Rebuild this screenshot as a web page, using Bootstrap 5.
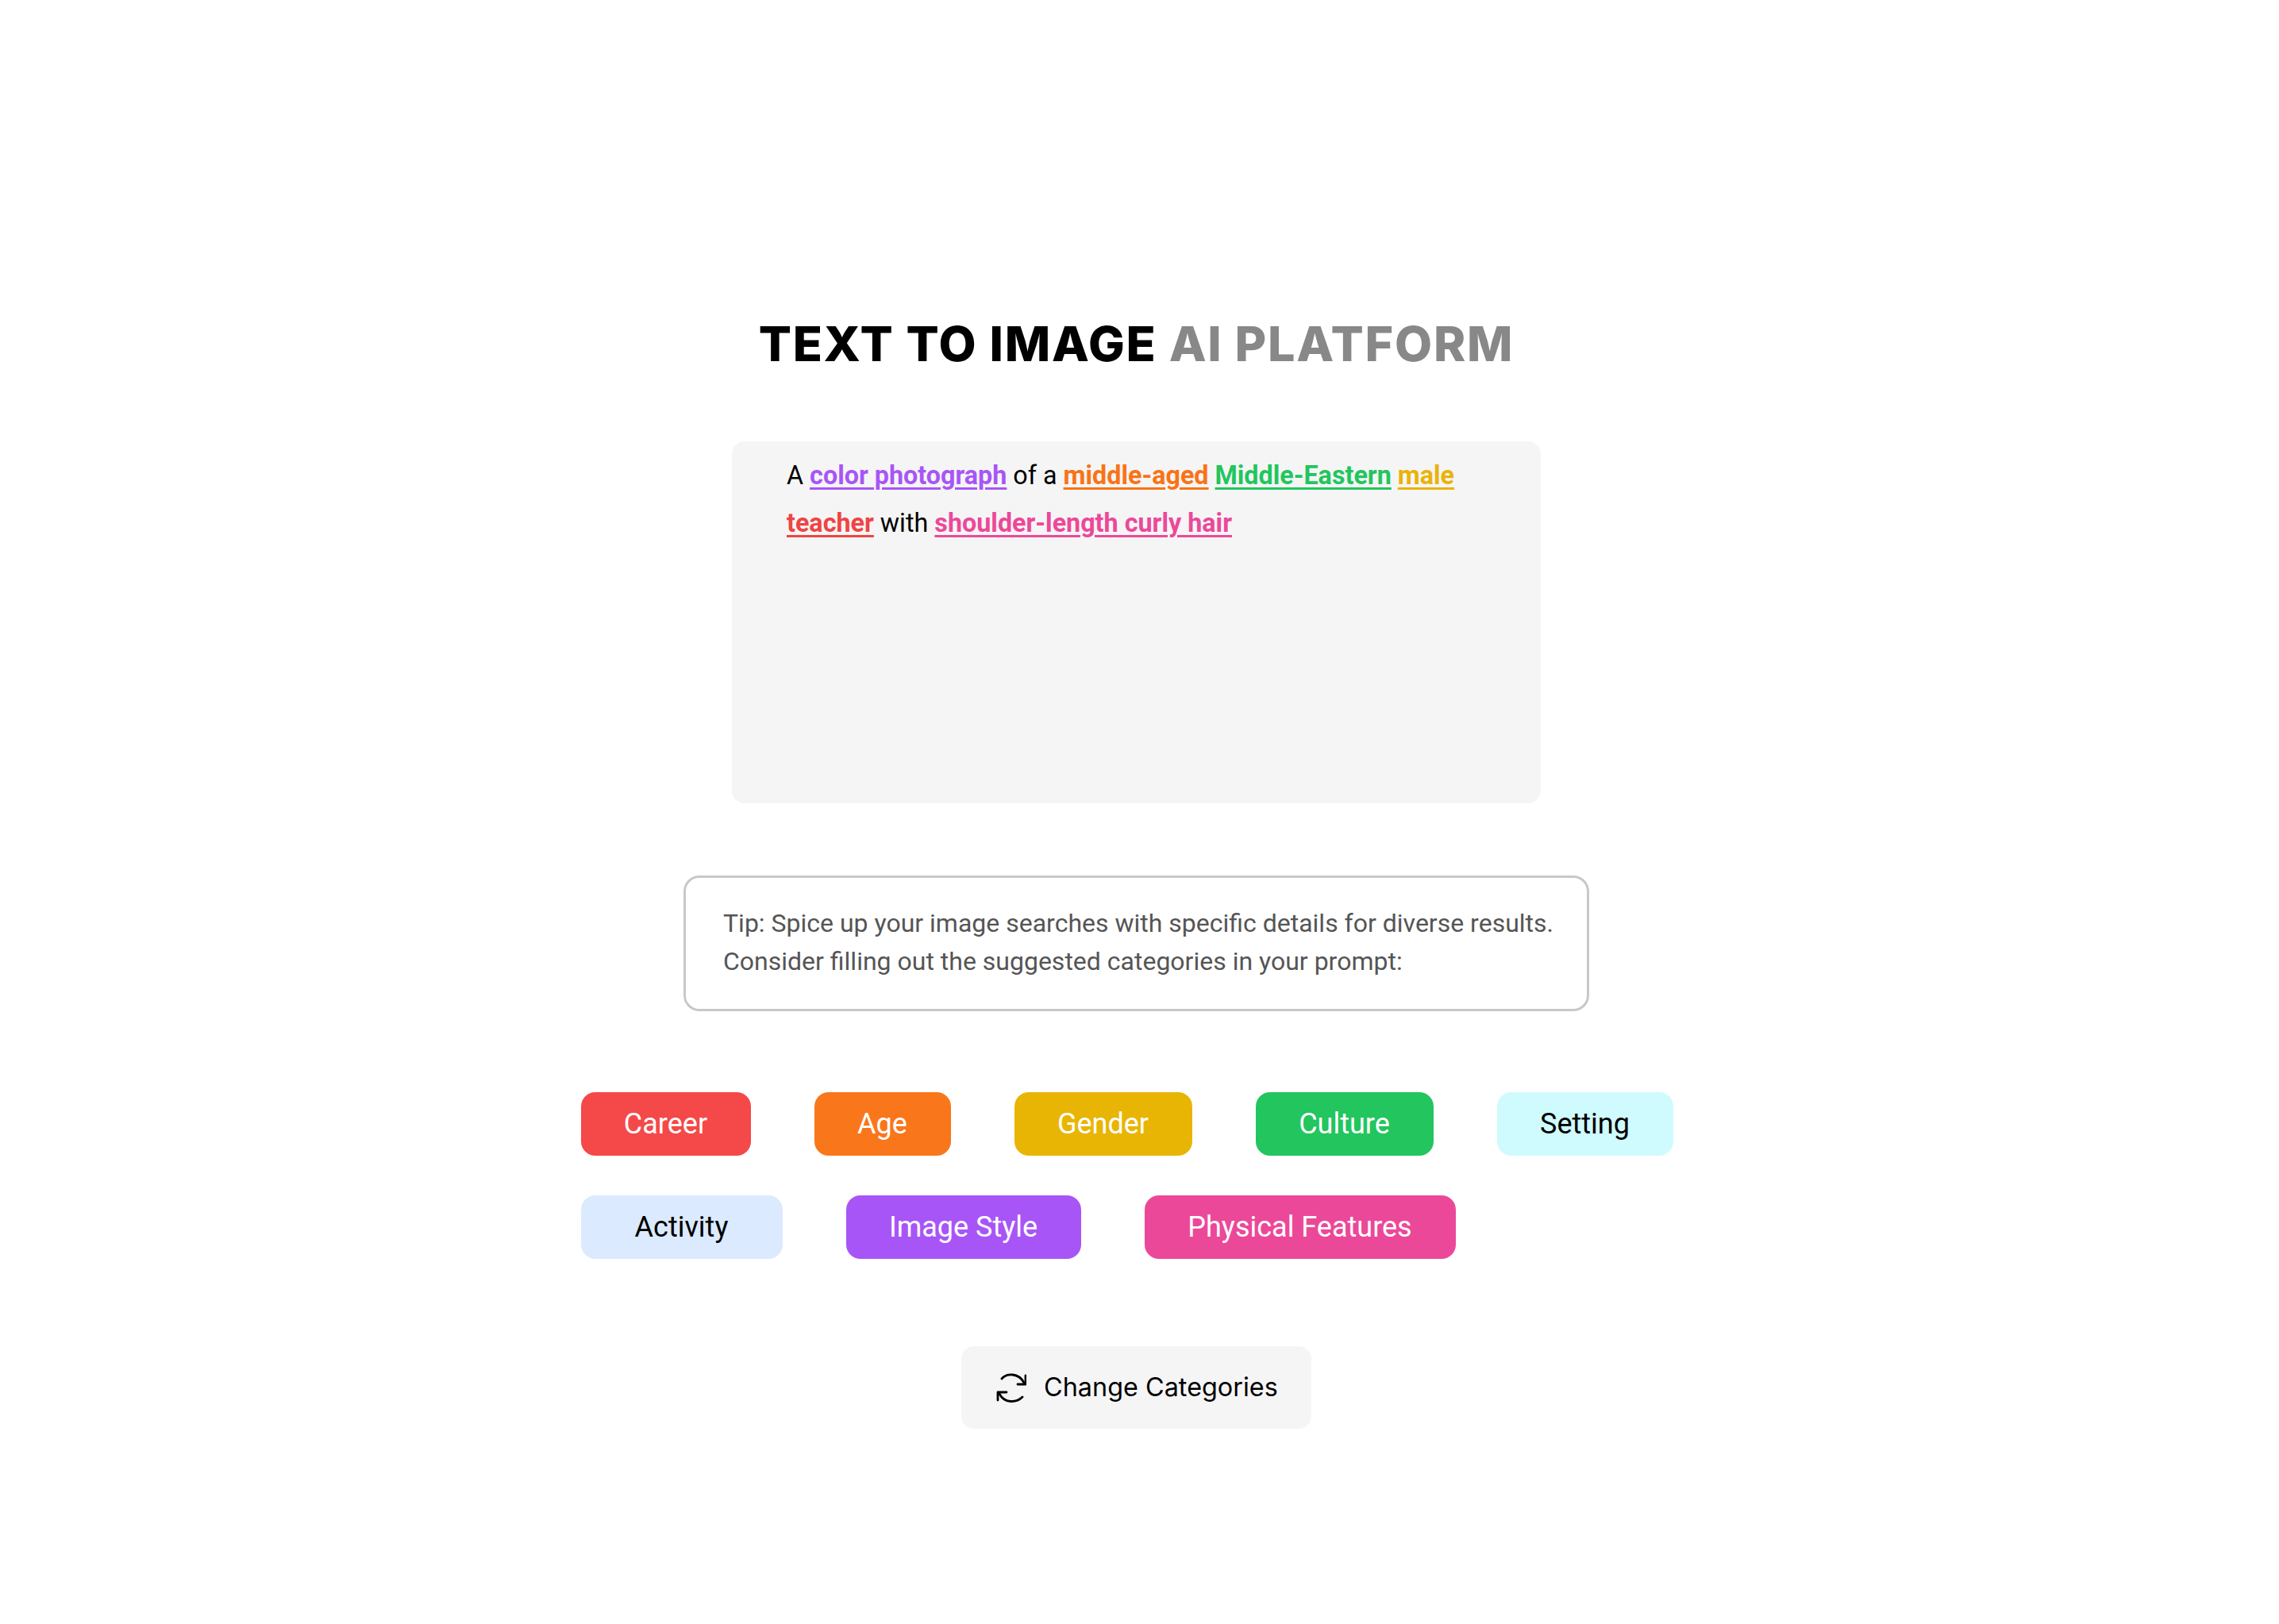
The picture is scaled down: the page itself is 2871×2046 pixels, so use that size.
<!DOCTYPE html>
<html lang="en"><head><meta charset="utf-8"><title>Text to Image AI Platform</title>
<link href="https://cdn.jsdelivr.net/npm/bootstrap@5.3.0/dist/css/bootstrap.min.css" rel="stylesheet">
<style>
body{background:#fff;font-family:Roboto,"Liberation Sans",sans-serif;color:#000}
.page-wrap{padding:396px 8px 0 0;min-height:2046px}
.hero-title{font-family:Inter,"Liberation Sans",sans-serif;font-weight:800;font-size:61px;line-height:74px;margin:0 0 86px;letter-spacing:1.750px;white-space:nowrap}
.hero-title span{color:#888}
.prompt-box{width:1019px;height:456px;background:#f5f5f5;border-radius:16px;padding:13px 69px;font-size:32.300px;line-height:60px;white-space:nowrap}
.prompt-box b{font-weight:700;text-decoration:underline;text-underline-offset:4px;text-decoration-thickness:3px}
.c-style{color:#a855f7}.c-age{color:#f97316}.c-culture{color:#22c55e}.c-gender{color:#eab308}.c-career{color:#ef4444}.c-feat{color:#ec4899}
.tip-box{width:1141px;height:171px;margin-top:91px;border:3px solid #c8c8c8;border-radius:20px;padding:33px 47px;font-size:32px;line-height:48px;color:#555;white-space:nowrap}
.tag-wrap{width:1400px;margin-top:102px;gap:50px 80px}
.tag-pill{height:80px;border-radius:18px;font-size:36px;line-height:80px;color:#fff;text-align:center}
.t-career{width:214px;background:#f54848}.t-age{width:172px;background:#fa761b}.t-gender{width:224px;background:#e9b505}.t-culture{width:224px;background:#22c55e}
.t-setting{width:222px;background:#cffafe;color:#000}.t-activity{width:254px;background:#dbeafe;color:#000}.t-style{width:296px;background:#a855f7}.t-feat{width:392px;background:#ec4899}
.change-btn{width:441px;height:104px;margin-top:110px;background:#f5f5f5;border-radius:16px;font-family:Inter,"Liberation Sans",sans-serif;font-size:32.400px;gap:22px;padding-left:44px}
</style></head><body>
<main class="page-wrap d-flex flex-column align-items-center">
<h1 class="hero-title">TEXT TO IMAGE <span>AI PLATFORM</span></h1>
<div class="prompt-box">A <b class="c-style">color photograph</b> of a <b class="c-age">middle-aged</b> <b class="c-culture">Middle-Eastern</b> <b class="c-gender">male</b><br><b class="c-career">teacher</b> with <b class="c-feat">shoulder-length curly hair</b></div>
<div class="tip-box">Tip: Spice up your image searches with specific details for diverse results.<br>Consider filling out the suggested categories in your prompt:</div>
<div class="tag-wrap d-flex flex-wrap">
<div class="tag-pill t-career">Career</div><div class="tag-pill t-age">Age</div><div class="tag-pill t-gender">Gender</div><div class="tag-pill t-culture">Culture</div><div class="tag-pill t-setting">Setting</div>
<div class="tag-pill t-activity">Activity</div><div class="tag-pill t-style">Image Style</div><div class="tag-pill t-feat">Physical Features</div>
</div>
<div class="change-btn d-flex align-items-center">
<svg width="38" height="38" viewBox="0 0 38 38" fill="none" stroke="#000" stroke-width="2.800" stroke-linecap="round" stroke-linejoin="round"><path d="M7 8C13 1 28 0 35 13"/><path d="M37 4v11H27"/><path d="M33 31C26 38 11 40 4 27"/><path d="M2 35V25h11"/></svg>
<span>Change Categories</span></div>
</main>
<script src="https://cdn.jsdelivr.net/npm/bootstrap@5.3.0/dist/js/bootstrap.bundle.min.js"></script>
</body></html>
